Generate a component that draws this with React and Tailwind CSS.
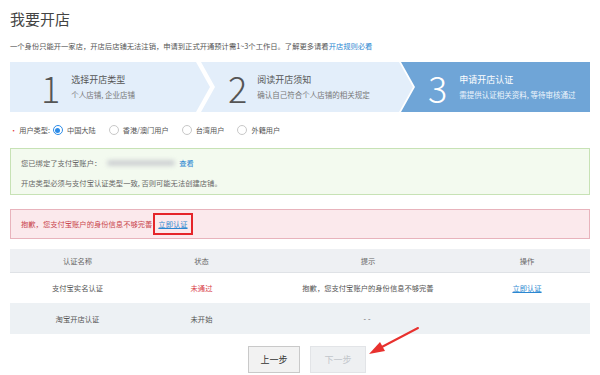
import React from 'react';

const font = { fontFamily: '"Noto Sans CJK SC", "Noto Sans", sans-serif' };

function Radio({ checked, label }) {
  return (
    <label className="flex items-center gap-[4px]">
      {checked ? (
        <span className="w-[10px] h-[10px] rounded-full border border-[#2d8ce8] flex items-center justify-center">
          <span className="w-[5px] h-[5px] rounded-full bg-[#2d8ce8]" />
        </span>
      ) : (
        <span className="w-[10px] h-[10px] rounded-full border border-[#c8c8c8] bg-white" />
      )}
      <span>{label}</span>
    </label>
  );
}

function App() {
  return (
    <div className="relative w-[600px] h-[375px] bg-white overflow-hidden text-[#555]" style={font}>
      <div className="px-[10px]">
        {/* Title */}
        <h1 className="pt-[9px] text-[15px] leading-[20px] text-[#444]">我要开店</h1>
        <p className="mt-[12px] text-[7.3px] leading-[10px] text-[#555]">
          一个身份只能开一家店，开店后店铺无法注销，申请到正式开通预计需1~3个工作日。了解更多请看
          <span className="text-[#2b87d1]">开店规则必看</span>
        </p>

        {/* Steps */}
        <div className="mt-[11px] flex h-[50px]">
          <div className="w-[200px] bg-[#e3eefa] flex items-center [clip-path:polygon(0_0,186px_0,200px_50%,186px_100%,0_100%)]">
            <span className="ml-[31px] text-[36px] font-light leading-none text-[#555]">1</span>
            <div className="ml-[11px]">
              <div className="text-[9px] leading-[12px] text-[#555]">选择开店类型</div>
              <div className="mt-[4px] text-[7.5px] leading-[10px] text-[#777]">个人店铺, 企业店铺</div>
            </div>
          </div>
          <div className="ml-[-9px] w-[212px] bg-[#e3eefa] flex items-center [clip-path:polygon(0_0,198px_0,212px_50%,198px_100%,0_100%,14px_50%)]">
            <span className="ml-[27px] text-[36px] font-light leading-none text-[#555]">2</span>
            <div className="ml-[10px]">
              <div className="text-[9px] leading-[12px] text-[#555]">阅读开店须知</div>
              <div className="mt-[4px] text-[7.5px] leading-[10px] text-[#777]">确认自己符合个人店铺的相关规定</div>
            </div>
          </div>
          <div className="ml-[-12px] flex-1 bg-[#6fa5d7] flex items-center [clip-path:polygon(0_0,100%_0,100%_100%,0_100%,14px_50%)]">
            <span className="ml-[27px] text-[36px] font-light leading-none text-white">3</span>
            <div className="ml-[12px]">
              <div className="text-[9px] leading-[12px] text-white">申请开店认证</div>
              <div className="mt-[4px] text-[7.5px] leading-[10px] text-[#eef5fc]">需提供认证相关资料, 等待审核通过</div>
            </div>
          </div>
        </div>

        {/* User type */}
        <div className="mt-[12px] flex items-center text-[7.2px] leading-[12px] text-[#555]">
          <span className="text-[#e4393c] mr-[2px]">•</span>
          <span>用户类型:</span>
          <div className="ml-[3px] flex items-center gap-[13px]">
            <Radio checked label="中国大陆" />
            <Radio label="香港/澳门用户" />
            <Radio label="台湾用户" />
            <Radio label="外籍用户" />
          </div>
        </div>

        {/* Bound account notice */}
        <div className="mt-[12px] h-[47px] border border-[#c7e2b5] bg-[#f3faef] px-[10px] text-[7.3px] leading-[10px] text-[#666]">
          <div className="mt-[9px] flex items-center">
            <span>您已绑定了支付宝账户：</span>
            <span className="ml-[6px] w-[68px] h-[6px] rounded-full bg-[#cfd2d4] blur-[2px]" />
            <span className="ml-[4px] text-[#2b87d1]">查看</span>
          </div>
          <div className="mt-[10px]">开店类型必须与支付宝认证类型一致, 否则可能无法创建店铺。</div>
        </div>

        {/* Error notice */}
        <div className="mt-[14px] h-[30px] border border-[#e8b3bc] bg-[#fbe9ec] pl-[10px] flex items-center text-[7.3px] leading-[10px] text-[#c9464e]">
          <span>抱歉，您支付宝账户的身份信息不够完善</span>
          <span className="ml-[1px] border-2 border-[#e5252a] px-[3px] py-[4px] text-[#2b87d1] underline">立即认证</span>
        </div>

        {/* Table */}
        <div className="mt-[10px] text-[7.3px] leading-[10px] text-[#555]">
          <div className="grid grid-cols-[135px_113px_220px_1fr] h-[24px] items-center bg-[#eef0f3] border-b border-[#dfe2e6] text-center text-[#666]">
            <span>认证名称</span>
            <span>状态</span>
            <span>提示</span>
            <span className="pr-[14px]">操作</span>
          </div>
          <div className="grid grid-cols-[135px_113px_220px_1fr] h-[30px] items-center bg-white text-center">
            <span>支付宝实名认证</span>
            <span className="text-[#d9414b]">未通过</span>
            <span>抱歉，您支付宝账户的身份信息不够完善</span>
            <span className="pr-[14px] text-[#2b87d1] underline">立即认证</span>
          </div>
          <div className="grid grid-cols-[135px_113px_220px_1fr] h-[31px] items-center bg-[#edf1f4] text-center">
            <span>淘宝开店认证</span>
            <span>未开始</span>
            <span className="tracking-[2px]">--</span>
            <span />
          </div>
        </div>

        {/* Buttons */}
        <div className="mt-[12px] flex justify-center gap-[10px] pl-[14px]">
          <button className="w-[52px] h-[27px] border border-[#c9c9c9] bg-[#f2f2f2] text-[9px] text-[#333]">上一步</button>
          <button className="w-[56px] h-[27px] border border-[#e2e4e7] bg-[#eef0f2] text-[9px] text-[#c2c6cb]">下一步</button>
        </div>
      </div>

      {/* Red annotation arrow */}
      <svg className="absolute left-[360px] top-[320px]" width="70" height="40" viewBox="0 0 70 40">
        <line x1="58" y1="8" x2="18" y2="29" stroke="#e8312e" strokeWidth="2" strokeLinecap="round" />
        <polygon points="9,34 20,22 25,31" fill="#e8312e" />
      </svg>
    </div>
  );
}

export default App;
